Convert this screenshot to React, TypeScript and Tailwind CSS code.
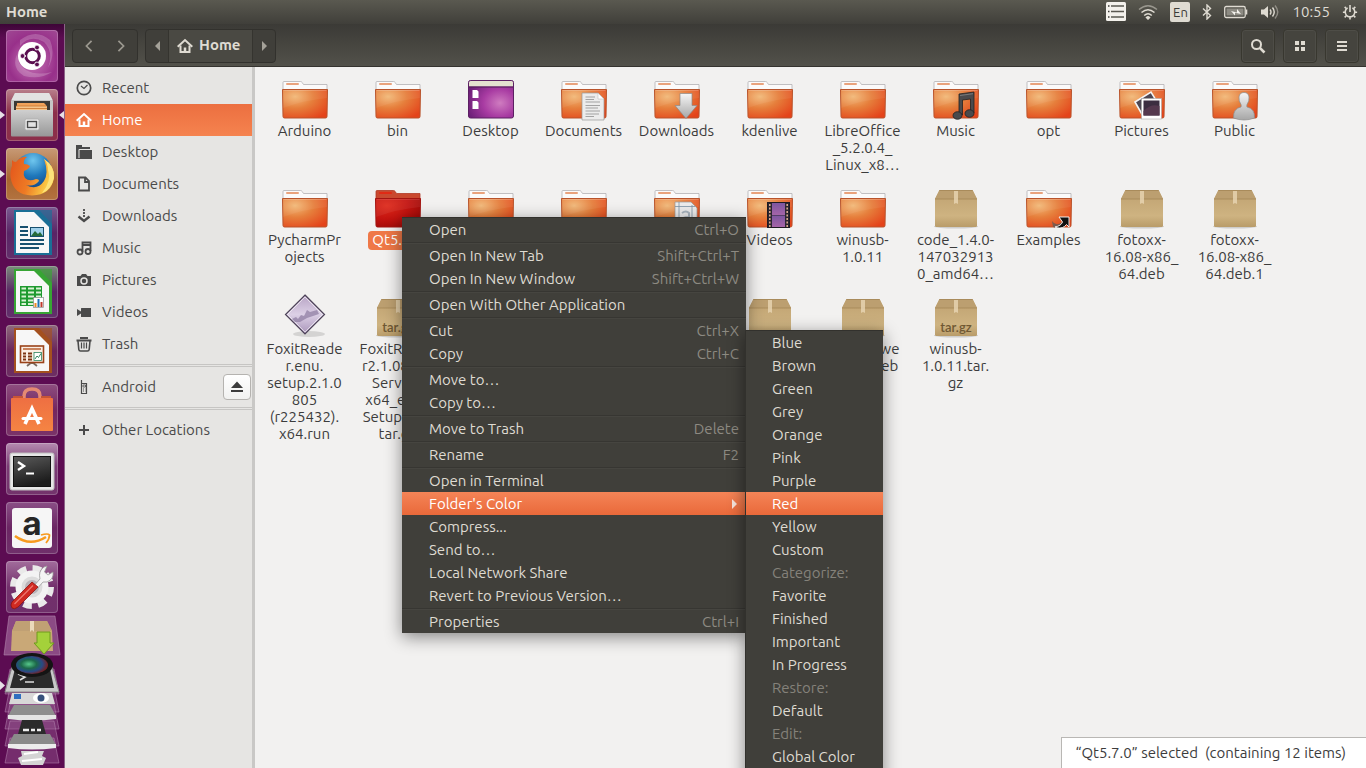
import type { ReactNode } from "react";

// ─── Types & data ─────────────────────────────────────────────
type IconKind =
  | "folder"
  | "red"
  | "desktop"
  | "documents"
  | "downloads"
  | "music"
  | "pictures"
  | "public"
  | "templates"
  | "videos"
  | "link"
  | "package"
  | "targz"
  | "foxit";

type FileItem = { icon: IconKind; lines: string[]; selected?: boolean };

const files: FileItem[] = [
  { icon: "folder", lines: ["Arduino"] },
  { icon: "folder", lines: ["bin"] },
  { icon: "desktop", lines: ["Desktop"] },
  { icon: "documents", lines: ["Documents"] },
  { icon: "downloads", lines: ["Downloads"] },
  { icon: "folder", lines: ["kdenlive"] },
  { icon: "folder", lines: ["LibreOffice", "_5.2.0.4_", "Linux_x8…"] },
  { icon: "music", lines: ["Music"] },
  { icon: "folder", lines: ["opt"] },
  { icon: "pictures", lines: ["Pictures"] },
  { icon: "public", lines: ["Public"] },
  { icon: "folder", lines: ["PycharmPr", "ojects"] },
  { icon: "red", lines: ["Qt5.7.0"], selected: true },
  { icon: "folder", lines: [] },
  { icon: "folder", lines: [] },
  { icon: "templates", lines: [] },
  { icon: "videos", lines: ["Videos"] },
  { icon: "folder", lines: ["winusb-", "1.0.11"] },
  { icon: "package", lines: ["code_1.4.0-", "147032913", "0_amd64…"] },
  { icon: "link", lines: ["Examples"] },
  { icon: "package", lines: ["fotoxx-", "16.08-x86_", "64.deb"] },
  { icon: "package", lines: ["fotoxx-", "16.08-x86_", "64.deb.1"] },
  {
    icon: "foxit",
    lines: ["FoxitReade", "r.enu.", "setup.2.1.0", "805", "(r225432).", "x64.run"],
  },
  {
    icon: "targz",
    lines: ["FoxitReade", "r2.1.0805_", "Server_", "x64_enu_", "Setup.run.", "tar.gz"],
  },
  { icon: "package", lines: [] },
  { icon: "package", lines: [] },
  { icon: "package", lines: [] },
  { icon: "package", lines: [] },
  { icon: "package", lines: ["teamviewe", "r_i386.deb"] },
  { icon: "targz", lines: ["winusb-", "1.0.11.tar.", "gz"] },
];

type MenuEntry = { label: string; keys?: string; active?: boolean };

// groups are divided by an etched line
const menuGroups: MenuEntry[][] = [
  [{ label: "Open", keys: "Ctrl+O" }],
  [
    { label: "Open In New Tab", keys: "Shift+Ctrl+T" },
    { label: "Open In New Window", keys: "Shift+Ctrl+W" },
  ],
  [{ label: "Open With Other Application" }],
  [
    { label: "Cut", keys: "Ctrl+X" },
    { label: "Copy", keys: "Ctrl+C" },
  ],
  [{ label: "Move to…" }, { label: "Copy to…" }],
  [{ label: "Move to Trash", keys: "Delete" }],
  [{ label: "Rename", keys: "F2" }],
  [
    { label: "Open in Terminal" },
    { label: "Folder's Color", active: true },
    { label: "Compress..." },
    { label: "Send to…" },
    { label: "Local Network Share" },
    { label: "Revert to Previous Version…" },
  ],
  [{ label: "Properties", keys: "Ctrl+I" }],
];

const colorMenu = [
  "Blue",
  "Brown",
  "Green",
  "Grey",
  "Orange",
  "Pink",
  "Purple",
  "Red",
  "Yellow",
  "Custom",
  "Categorize:",
  "Favorite",
  "Finished",
  "Important",
  "In Progress",
  "Restore:",
  "Default",
  "Edit:",
  "Global Color",
];

// ─── Shared gradients ─────────────────────────────────────────
const Gradients = () => (
  <svg width="0" height="0" className="absolute" aria-hidden="true">
    <defs>
      <radialGradient id="gFolder" cx="0.28" cy="0.25" r="0.9">
        <stop offset="0" stopColor="#f2b877" />
        <stop offset="0.45" stopColor="#e67f3c" />
        <stop offset="1" stopColor="#e4431a" />
      </radialGradient>
      <radialGradient id="gRed" cx="0.25" cy="0.25" r="0.95">
        <stop offset="0" stopColor="#dd2a1b" />
        <stop offset="0.5" stopColor="#c3130f" />
        <stop offset="1" stopColor="#960806" />
      </radialGradient>
      <radialGradient id="gDesk" cx="0.7" cy="0.6" r="0.75">
        <stop offset="0" stopColor="#cf7cc0" />
        <stop offset="0.5" stopColor="#a83ba2" />
        <stop offset="1" stopColor="#6d1f78" />
      </radialGradient>
      <linearGradient id="gBox" x1="0" y1="0" x2="0" y2="1">
        <stop offset="0.2" stopColor="#c3a675" />
        <stop offset="0.7" stopColor="#ceb381" />
        <stop offset="1" stopColor="#b99c69" />
      </linearGradient>
      <linearGradient id="gSilver" x1="0" y1="0" x2="0" y2="1">
        <stop offset="0" stopColor="#f6f6f6" />
        <stop offset="1" stopColor="#a6a6a6" />
      </linearGradient>
      <linearGradient id="gDrawer" x1="0" y1="0" x2="0" y2="1">
        <stop offset="0" stopColor="#cfcfcf" />
        <stop offset="1" stopColor="#979797" />
      </linearGradient>
      <linearGradient id="gFilm" x1="0" y1="0" x2="0" y2="1">
        <stop offset="0" stopColor="#7d56a0" />
        <stop offset="1" stopColor="#a565a8" />
      </linearGradient>
      <linearGradient id="gFoxit" x1="0" y1="0" x2="0" y2="1">
        <stop offset="0" stopColor="#b7a3c4" />
        <stop offset="0.5" stopColor="#dcd0e6" />
        <stop offset="1" stopColor="#a994b9" />
      </linearGradient>
      <radialGradient id="gGlobe" cx="0.5" cy="0.2" r="0.8">
        <stop offset="0" stopColor="#6fc6ee" />
        <stop offset="0.5" stopColor="#1f78bb" />
        <stop offset="1" stopColor="#123f7d" />
      </radialGradient>
      <linearGradient id="gFox" x1="0" y1="0" x2="1" y2="0.3">
        <stop offset="0" stopColor="#e2531c" />
        <stop offset="0.55" stopColor="#ee7a24" />
        <stop offset="1" stopColor="#fbd148" />
      </linearGradient>
      <linearGradient id="gBag" x1="0" y1="0" x2="0" y2="1">
        <stop offset="0" stopColor="#ee6f42" />
        <stop offset="1" stopColor="#f58443" />
      </linearGradient>
      <linearGradient id="gTerm" x1="0" y1="0" x2="0.3" y2="1">
        <stop offset="0" stopColor="#5a5a5a" />
        <stop offset="1" stopColor="#1c1c1c" />
      </linearGradient>
      <radialGradient id="gLens" cx="0.4" cy="0.45" r="0.6">
        <stop offset="0" stopColor="#57c98b" />
        <stop offset="0.4" stopColor="#1d6a4a" />
        <stop offset="0.7" stopColor="#274a86" />
        <stop offset="1" stopColor="#7a1e1e" />
      </radialGradient>
    </defs>
  </svg>
);

// ─── File icons ───────────────────────────────────────────────
const Folder = ({ red }: { red?: boolean }) => (
  <g>
    <path
      d="M2 12V2.500Q2 1.500 3 1.500H19.500Q20.500 1.500 21.200 2.500L22.500 4.500H46V12Z"
      fill={red ? "#c9492f" : "#fbfafa"}
      stroke={red ? "#b03a26" : "#b3b1b4"}
      strokeWidth="0.8"
    />
    <rect x="5" y="3" width="13" height="2" rx="1" fill={red ? "#e02a15" : "#e9a27c"} />
    <path
      d="M1.500 9.500H46.500L46 36.500Q46 38 44.500 38H3.500Q2 38 2 36.500Z"
      fill={red ? "url(#gRed)" : "url(#gFolder)"}
      stroke={red ? "#a31410" : "#b9542c"}
      strokeWidth="1"
    />
    <path d="M2.500 10.500H45.500" stroke="#fff" strokeOpacity={red ? 0.1 : 0.2} />
    <path d="M2 10H46L46 18Q24 20 2 28Z" fill="#fff" opacity="0.06" />
  </g>
);

const Box = ({ tar }: { tar?: boolean }) => (
  <g>
    <ellipse cx="24" cy="37.500" rx="22" ry="2" fill="#000" opacity="0.15" />
    <path d="M7.500 1H40.500L45 10V36.500Q45 38 43.500 38H4.500Q3 38 3 36.500V10Z" fill="url(#gBox)" />
    <path d="M7.500 1H40.500L45 10H3Z" fill="#bc9f70" />
    <path d="M7.500 1.500H40.500M3 10H45" stroke="#a58655" strokeWidth="0.8" />
    <path d="M22 2H26V15L24 14L22 15Z" fill="#e8d6b4" opacity="0.8" />
    {tar && (
      <text
        x="24"
        y="34"
        textAnchor="middle"
        fontSize="13"
        fontFamily="Lato, sans-serif"
        fontWeight="600"
        fill="#6f5833"
      >
        tar.gz
      </text>
    )}
  </g>
);

const overlays: Partial<Record<IconKind, ReactNode>> = {
  documents: (
    <g>
      <path d="M22 13H38L44 19V40H22Z" fill="#ececec" stroke="#9a9a9a" strokeWidth="0.7" />
      <path d="M38 13V19H44Z" fill="#fff" stroke="#b5b5b5" strokeWidth="0.5" />
      <path
        d="M25.500 17H35M25.500 19.500H34M25.500 22H40M25.500 25.500H40M25.500 28H38M25.500 31H40M25.500 34H39M25.500 36.500H34"
        stroke="#9b9b9b"
        strokeWidth="0.9"
      />
    </g>
  ),
  downloads: (
    <path
      d="M27 13.500H39V25.500H44L33 38.500L22 25.500H27Z"
      fill="url(#gSilver)"
      stroke="#8b8b8b"
      strokeWidth="0.7"
    />
  ),
  music: (
    <g stroke="#222" strokeWidth="0.8" fill="#4a4a4c">
      <path d="M27 14L42 12V33H38.500V19L30.500 20V35H27Z" />
      <ellipse cx="25.500" cy="35.500" rx="4.500" ry="3.800" />
      <ellipse cx="37.500" cy="33.500" rx="4.500" ry="3.800" />
      <path d="M28 15.500L41 13.700" stroke="#888" />
    </g>
  ),
  pictures: (
    <g>
      <path d="M17 22L33 12L41 25L25 36Z" fill="#4d4652" stroke="#f4f4f4" strokeWidth="1.600" />
      <rect x="23.500" y="18.500" width="20" height="20.500" fill="#fff" stroke="#a9a9a9" strokeWidth="0.6" />
      <rect x="25.500" y="20.500" width="16" height="15" fill="#3b2d40" />
      <path d="M25.500 31Q33 23 41.500 26V35.500H25.500Z" fill="#54384e" />
    </g>
  ),
  public: (
    <g fill="url(#gSilver)" stroke="#8d8d8d" strokeWidth="0.7">
      <path d="M22.500 38Q22 28.500 30 27Q30.500 26 30 24.500Q27.500 21 28 17Q28.500 12.500 33 12.500Q37.500 12.500 38 17Q38.500 21 36 24.500Q35.500 26 36 27Q44 28.500 43.500 38Q33 42 22.500 38Z" />
    </g>
  ),
  templates: (
    <g>
      <path d="M22 13H38L44 19V39H22Z" fill="#ececec" stroke="#9a9a9a" strokeWidth="0.7" />
      <path d="M22 17.500H42M26 13V39M39 16V39" stroke="#7c93a5" strokeWidth="0.8" />
      <path d="M29 24Q33 21 36 24V33Q29 36 29 31Q29 28 36 28" fill="none" stroke="#a9b4be" strokeWidth="2" />
    </g>
  ),
  videos: (
    <g>
      <rect x="21.500" y="13.500" width="22" height="25" fill="#2b2630" stroke="#1e1a22" />
      <rect x="26" y="14" width="13" height="12" fill="url(#gFilm)" />
      <rect x="26" y="26.500" width="13" height="11.500" fill="url(#gFilm)" />
      <path d="M23.800 15V38M41.200 15V38" stroke="#d9a98c" strokeWidth="1.600" strokeDasharray="2 1.500" />
    </g>
  ),
  link: (
    <g>
      <path d="M27 32Q31 38 37 33L38 36Q33 40 28 38Z" fill="#7d5a4c" />
      <path
        d="M30 38Q36 37 37.500 33L34 28H44V38L41.500 35.500Q38 40 32 38.800Z"
        fill="#111"
        stroke="#fff"
        strokeWidth="0.9"
      />
    </g>
  ),
};

const FileIcon = ({ kind }: { kind: IconKind }) => {
  let body: ReactNode;
  if (kind === "package" || kind === "targz") {
    body = <Box tar={kind === "targz"} />;
  } else if (kind === "desktop") {
    body = (
      <g>
        <rect x="1.500" y="0.500" width="45" height="37.500" rx="2" fill="url(#gDesk)" stroke="#5c2063" />
        <path d="M2 6.500V2.500Q2 1 3.500 1H44.500Q46 1 46 2.500V6.500Z" fill="#e4e1cf" />
        <path d="M2 7H46" stroke="#4e1d55" />
        <path d="M5.500 10H10L11.500 11.500V18H5.500ZM5.500 21H10L11.500 22.500V29H5.500Z" fill="#fff" />
      </g>
    );
  } else if (kind === "foxit") {
    body = (
      <g>
        <ellipse cx="28" cy="36" rx="16" ry="3" fill="#000" opacity="0.12" />
        <path d="M24 -3L43.500 16.500L24 36L4.500 16.500Z" fill="url(#gFoxit)" stroke="#4e4459" strokeWidth="1.200" />
        <path d="M24 -1L41.500 16.500L24 34L6.500 16.500Z" fill="none" stroke="#fff" strokeOpacity="0.6" />
        <path d="M11 21L15 19L17 21L20 17L23 18L26 12L29 14L36 12L38 16L26 20L19 24L14 24Z" fill="#8b7aa0" opacity="0.7" />
      </g>
    );
  } else {
    body = (
      <g>
        <Folder red={kind === "red"} />
        {overlays[kind]}
      </g>
    );
  }
  return (
    <svg viewBox="0 0 48 40" className="block h-10 w-12 overflow-visible" aria-hidden="true">
      {body}
    </svg>
  );
};

const FileTile = ({ item }: { item: FileItem }) => (
  <button type="button" className="flex h-[109px] flex-col items-center gap-[2px]">
    <FileIcon kind={item.icon} />
    <span
      className={
        item.selected
          ? "rounded bg-[#ef7847] px-1 pb-[2px] text-center text-[15px] leading-[17px] text-white"
          : "text-center text-[15px] leading-[17px] text-[#3c3c3c]"
      }
    >
      {item.lines.map((line) => (
        <span key={line} className="block whitespace-nowrap">
          {line}
        </span>
      ))}
    </span>
  </button>
);

// ─── Launcher ─────────────────────────────────────────────────
const OfficePage = ({ color, children }: { color: string; children: ReactNode }) => (
  <g>
    <path d="M8 3H33L46 17V48H8Z" fill={color} />
    <path d="M30 3H46V18Z" fill={color} opacity="0.65" />
    <path d="M10 5H28L43 20V46H10Z" fill="#f7f7f7" />
    {children}
  </g>
);

const launcherItems: { name: string; tint: string; left?: boolean; right?: boolean; icon: ReactNode }[] = [
  {
    name: "Search your computer",
    tint: "bg-[radial-gradient(circle_at_50%_60%,#c878b8,#98308a_60%,#a04a94)]",
    icon: (
      <g>
        <path
          d="M14 16Q24 4 38 12Q48 22 42 38Q50 24 44 10Q30 -2 14 10ZM12 22Q4 38 18 46Q34 50 46 42Q30 46 20 40Q10 34 12 22Z"
          fill="#fff"
          fillOpacity="0.2"
        />
        <circle cx="26" cy="26" r="14" fill="#fff" />
        <circle cx="26.500" cy="26" r="6.800" fill="none" stroke="#5b0f50" strokeWidth="3" />
        <path d="M20 26H15M29.500 20L32 16M29.500 32L32 36" stroke="#fff" strokeWidth="1.500" />
        <circle cx="16.500" cy="26" r="2.400" fill="#5b0f50" stroke="#fff" strokeWidth="0.8" />
        <circle cx="31" cy="17.500" r="2.400" fill="#5b0f50" stroke="#fff" strokeWidth="0.8" />
        <circle cx="31" cy="34.500" r="2.400" fill="#5b0f50" stroke="#fff" strokeWidth="0.8" />
      </g>
    ),
  },
  {
    name: "Files",
    tint: "bg-[linear-gradient(#b9808c,#8c2f4a_45%,#8c2f4a)]",
    left: true,
    right: true,
    icon: (
      <g>
        <path d="M9 4H43L47 12V46H5V12Z" fill="#c6c6c6" />
        <path d="M9 4H43L46.500 11H5.500Z" fill="#e2e2e2" />
        <rect x="8" y="12" width="36" height="11" fill="#3b3936" />
        <path d="M11 14H38L40 16V22H11Z" fill="#f1a25a" />
        <path d="M10 17H41V23H10Z" fill="#f6c489" />
        <path d="M10 17H41M10 19.500H41" stroke="#c9732d" strokeWidth="0.8" />
        <rect x="5" y="21" width="42" height="26.500" rx="1" fill="url(#gDrawer)" />
        <rect x="19" y="30" width="14" height="11" rx="1.500" fill="#f2f2f2" stroke="#b0b0b0" />
        <rect x="21.500" y="32.500" width="9" height="6" fill="#e2e2e2" stroke="#4a4a4a" strokeWidth="1.400" />
      </g>
    ),
  },
  {
    name: "Firefox",
    tint: "bg-[linear-gradient(#c79a76,#a8642f_60%,#b27340)]",
    left: true,
    icon: (
      <g>
        <circle cx="27" cy="24" r="19" fill="url(#gGlobe)" />
        <path
          d="M6 12Q7 14 10 14Q15 8 21 9Q17 12 18 16Q22 16 24 18Q23 21 18 23Q17 27 19 30Q23 34 30 31Q33 31 33 33Q28 39 20 37Q31 43 38 33Q43 25 38 11Q49 18 48 30Q45 47 26 47.500Q7 47 4.500 29Q4 22 6 18Z"
          fill="url(#gFox)"
        />
        <path d="M38 11Q49 18 48 30Q45 42 36 45Q46 33 42 22Q42 16 38 11Z" fill="#fde27a" />
      </g>
    ),
  },
  {
    name: "LibreOffice Writer",
    tint: "bg-[linear-gradient(#7a5a90,#5a2465_50%,#63306b)]",
    icon: (
      <OfficePage color="#1a6f96">
        <path d="M14 20H22M14 24H22M14 28H22M14 33H38M14 37H38M14 41H33" stroke="#17506f" strokeWidth="2" />
        <rect x="24.500" y="20.500" width="13" height="9" fill="#9fd0ea" stroke="#17506f" />
        <path d="M25 29L29 24L32 27L34 25L37 29Z" fill="#256b39" />
      </OfficePage>
    ),
  },
  {
    name: "LibreOffice Calc",
    tint: "bg-[linear-gradient(#7a8c7a,#5a2465_50%,#63306b)]",
    icon: (
      <OfficePage color="#37a534">
        <rect x="14" y="20" width="22" height="20" fill="#1f9a30" />
        <path
          d="M15.500 22.500H20M22 22.500H28M30 22.500H35M15.500 26.500H20M22 26.500H28M30 26.500H35M15.500 30.500H20M22 30.500H28M30 30.500H35M15.500 34.500H20M22 34.500H28M15.500 38H20M22 38H28"
          stroke="#d9f2d4"
          strokeWidth="2"
        />
        <rect x="27.500" y="31.500" width="10" height="10" fill="#fff" stroke="#8a8a8a" strokeWidth="0.7" />
        <path d="M29.500 41V37" stroke="#f08a24" strokeWidth="2" />
        <path d="M32.500 41V33" stroke="#2272b4" strokeWidth="2" />
        <path d="M35.500 41V36" stroke="#c0392b" strokeWidth="2" />
      </OfficePage>
    ),
  },
  {
    name: "LibreOffice Impress",
    tint: "bg-[linear-gradient(#8e6a7c,#6a2459_50%,#6d2f63)]",
    icon: (
      <OfficePage color="#a4501f">
        <path d="M21 41L26 37L31 41M26 37V39" stroke="#7a6a60" strokeWidth="1.800" fill="none" />
        <rect x="14.500" y="21" width="23" height="16.500" fill="#fbeee4" stroke="#9a431a" strokeWidth="1.600" />
        <path d="M17 24H35" stroke="#b95f31" strokeWidth="1.500" />
        <path d="M17 28.500H20M22 28.500H26M17 31.500H20M22 31.500H26M17 34.500H20M22 34.500H26" stroke="#7c3413" strokeWidth="1.800" />
        <rect x="28" y="27.500" width="7.500" height="8" fill="#fff" stroke="#2f8560" strokeWidth="0.8" />
        <path d="M29 34L31 31L32.500 32.500L35 28.500" stroke="#2f8560" fill="none" />
      </OfficePage>
    ),
  },
  {
    name: "Ubuntu Software",
    tint: "bg-[linear-gradient(#8e4f80,#74265f_50%,#7a3369)]",
    icon: (
      <g>
        <path d="M18 16V12Q18 5 26 5Q34 5 34 12V16" fill="none" stroke="#e58a72" strokeWidth="3.500" />
        <path d="M7 12H17V15H35V12H45V15H7Z" fill="#c65536" />
        <rect x="5" y="14" width="42" height="33" rx="1" fill="url(#gBag)" />
        <path d="M19 40L26 24.500L33 40" fill="none" stroke="#fff" strokeWidth="3.600" />
        <path d="M17 34.500H35" stroke="#fff" strokeWidth="3" strokeLinecap="round" />
      </g>
    ),
  },
  {
    name: "Terminal",
    tint: "bg-[linear-gradient(#b58bb0,#7a3a74_45%,#73336c)]",
    icon: (
      <g>
        <rect x="4" y="10" width="44" height="37" rx="2" fill="#e6e6e6" stroke="#bdbdbd" />
        <rect x="7.500" y="13.500" width="37" height="30" fill="url(#gTerm)" stroke="#111" />
        <path d="M12 19L18 23L12 27" fill="none" stroke="#fff" strokeWidth="2.400" />
        <path d="M20 30.500H28" stroke="#fff" strokeWidth="2.200" />
      </g>
    ),
  },
  {
    name: "Amazon",
    tint: "bg-[linear-gradient(#8a4f86,#6b2563_50%,#70306b)]",
    icon: (
      <g>
        <rect x="6" y="6" width="40" height="40" rx="3" fill="#f6f6f6" />
        <text
          x="26"
          y="33"
          textAnchor="middle"
          fontSize="33"
          fontFamily="Inter, sans-serif"
          fontWeight="700"
          fill="#262626"
        >
          a
        </text>
        <path d="M9 34Q24 45 40 35" fill="none" stroke="#f79a1e" strokeWidth="2.600" />
        <path d="M35 33Q42 31 43.500 33Q43.500 37 40 41" fill="none" stroke="#f79a1e" strokeWidth="1.800" />
      </g>
    ),
  },
  {
    name: "System Settings",
    tint: "bg-[linear-gradient(#a26d9c,#73306c_50%,#70306b)]",
    icon: (
      <g>
        <circle cx="26" cy="26" r="18" fill="none" stroke="#e9e9e9" strokeWidth="8" strokeDasharray="8.140 6" />
        <circle cx="26" cy="26" r="13.500" fill="#dcdcdc" stroke="#f3f3f3" strokeWidth="6" />
        <circle cx="26" cy="26" r="7" fill="#b9b4ba" />
        <path d="M26 27L34 18Q32 10 38 6L41 5L38.500 11L42 14L47 11Q48 18 41 21L37 21L29 30Z" fill="#f4f4f4" stroke="#9c9c9c" strokeWidth="0.8" />
        <path d="M6 41L26 21L32 26L12 46Q8 49 6 47Q4 44 6 41Z" fill="#d02a22" stroke="#8e1411" strokeWidth="0.8" />
        <path d="M8.500 43L27 24.500" stroke="#ee7a70" strokeWidth="1.200" />
      </g>
    ),
  },
];

// Icons that no longer fit fold over each other at the foot of the bar
const LauncherStack = () => (
  <svg viewBox="0 0 65 155" className="-mt-[7px] block h-[155px] w-[65px] shrink-0" aria-hidden="true">
    <path d="M0 68L5 72.500L0 77Z" fill="#e6dfe6" />
    {[56, 74, 91, 108, 125].map((y) => (
      <path
        key={y}
        d={`M10 ${y}H54L59 ${y + 25}H5Z`}
        fill="#9a5f97"
        fillOpacity="0.4"
        stroke="#b98bb6"
        strokeOpacity="0.5"
      />
    ))}
    <path d="M9 3H55L60 42H4Z" fill="#8b4a84" stroke="#b387ae" strokeOpacity="0.6" />
    {/* package installer */}
    <path d="M16 8H47L52 18L53 38H11L12 18Z" fill="#c9a877" />
    <path d="M16 8H47L52 18H12Z" fill="#c0a074" />
    <path d="M30 8H34V19L32 17L30 19Z" fill="#ead9ba" />
    <path d="M37 19H50V30H54L44 41L34 30H37Z" fill="#a4d13a" stroke="#6e9a1d" />
    {/* second terminal */}
    <path d="M12 54H52L59 79H5Z" fill="#c9c9c9" stroke="#8a8a8a" />
    <path d="M15 56H50L54 75H10Z" fill="#2b2b2b" />
    <path d="M18 61L25 64L20 67M25 69H34" stroke="#ddd" strokeWidth="1.600" fill="none" />
    {/* camera lens */}
    <ellipse cx="32" cy="52" rx="21" ry="12" fill="#141414" />
    <ellipse cx="32" cy="52" rx="16" ry="9" fill="url(#gLens)" />
    {/* drives and devices */}
    <path d="M12 80H52L55 91H9Z" fill="#d8d8d8" />
    <rect x="14" y="81" width="7" height="5" fill="#2f6fc0" />
    <ellipse cx="41" cy="85" rx="8" ry="5" fill="#fff" />
    <circle cx="41" cy="85" r="3.500" fill="#38517c" />
    <path d="M14 92H50L56 103H8Z" fill="#8e8e8e" />
    <path d="M8 102H56V106Q32 109 8 106Z" fill="#e4e4e4" />
    <path d="M22 107H42L46 121H18Z" fill="#2b2b2b" />
    <path d="M23 117H29M31 117H35M37 117H41" stroke="#eee" strokeWidth="2.400" />
    <path d="M14 121H50L56 132H8Z" fill="#8a8a8a" />
    <path d="M8 131H56V135Q32 138 8 135Z" fill="#ececec" />
    <path d="M21 138H44L42 143L46 145L43 152H21L18 145L22 143Z" fill="#d4d4d4" />
    <path d="M24 141L38 139M22 148L42 146" stroke="#fff" strokeWidth="2" />
  </svg>
);

const Launcher = () => (
  <nav
    aria-label="Launcher"
    className="flex w-[65px] shrink-0 flex-col overflow-hidden border-r border-[#8b6287] bg-[linear-gradient(#3d0537,#5c0c52_14px,#5c0c52)] pt-[6px]"
  >
    {launcherItems.map((item) => (
      <div key={item.name} className="flex h-[59px] shrink-0 items-start">
        <span className="flex h-[52px] w-[6px] items-center">
          {item.left && <span className="border-y-4 border-l-[5px] border-y-transparent border-l-[#e6dfe6]" />}
        </span>
        <button
          type="button"
          aria-label={item.name}
          className={`h-[52px] w-[52px] overflow-hidden rounded shadow-[inset_0_0_0_1px_rgba(255,255,255,0.22)] ${item.tint}`}
        >
          <svg viewBox="0 0 52 52" className="block h-full w-full">
            {item.icon}
          </svg>
        </button>
        <span className="flex h-[52px] flex-1 items-center justify-end">
          {item.right && <span className="border-y-4 border-r-[5px] border-y-transparent border-r-[#e6dfe6]" />}
        </span>
      </div>
    ))}
    <LauncherStack />
  </nav>
);

// ─── Top panel ────────────────────────────────────────────────
const TopPanel = () => (
  <header className="flex h-6 shrink-0 items-center justify-between bg-[linear-gradient(#5a5950,#403f3a)] pr-2 pl-[6px] text-[15px] leading-6 text-[#dfdbd2]">
    <span className="font-bold">Home</span>
    <div className="flex items-center">
      <svg viewBox="0 0 20 20" className="mr-3 h-5 w-5">
        <rect x="0" y="0" width="20" height="19" rx="1.500" fill="#f3f1ec" />
        <path d="M5 4H18M5 9.500H18M5 15H18" stroke="#5a5850" strokeWidth="1.600" />
        <path d="M2 4H3.500M2 9.500H3.500M2 15H3.500" stroke="#3a3935" strokeWidth="1.600" />
      </svg>
      <svg viewBox="0 0 20 16" className="mr-3 h-4 w-5" fill="none" stroke="currentColor" strokeWidth="1.500">
        <path d="M1 5.500Q10 -2 19 5.500" strokeOpacity="0.5" />
        <path d="M3.500 8.500Q10 3 16.500 8.500" />
        <path d="M6.200 11.500Q10 8 13.800 11.500" />
        <path d="M8.500 13.500L10 15L11.500 13.500Q10 12.200 8.500 13.500Z" fill="currentColor" />
      </svg>
      <span className="mr-3 h-5 w-5 rounded-xs bg-[#dfdbd2] text-center text-[13px] leading-5 text-[#3c3b37]">
        En
      </span>
      <svg viewBox="0 0 10 16" className="mr-3 h-4 w-[10px]" fill="none" stroke="currentColor" strokeWidth="1.400">
        <path d="M1 4.500L8.500 11.500L5 15V1L8.500 4.500L1 11.500" />
      </svg>
      <svg viewBox="0 0 24 14" className="mr-3 h-[14px] w-6" fill="none" stroke="currentColor">
        <rect x="0.700" y="1.500" width="20.500" height="11" rx="1.500" strokeWidth="1.300" />
        <rect x="2.500" y="3.500" width="17" height="7" fill="#8d8b83" stroke="none" />
        <path d="M22.500 4.500V9.500" strokeWidth="1.600" />
        <path d="M7 6L13 7.500V4L17 9L11 7.800V10.500Z" fill="#f5f3ee" stroke="none" />
      </svg>
      <svg viewBox="0 0 20 16" className="mr-3 h-4 w-5" fill="none" stroke="currentColor" strokeWidth="1.400">
        <path d="M1 5.500H4L8 2V14L4 10.500H1Z" fill="currentColor" stroke="none" />
        <path d="M10 5.500Q12 8 10 10.500M12.500 3.500Q16 8 12.500 12.500" />
        <path d="M15 1.500Q20.500 8 15 14.500" strokeOpacity="0.45" />
      </svg>
      <span className="mr-3">10:55</span>
      <svg viewBox="0 0 18 18" className="h-[18px] w-4" fill="none" stroke="currentColor">
        <path d="M6.300 4.400A5.400 5.400 0 1 0 11.700 4.400" strokeWidth="1.800" />
        <path d="M9 1V9" strokeWidth="1.800" />
        <path
          d="M4.800 5L3 3.200M13.200 5L15 3.200M3.500 9.200H1M14.500 9.200H17M4.800 13.200L3 15M13.200 13.200L15 15M9 15V17.500"
          strokeWidth="1.800"
        />
      </svg>
    </div>
  </header>
);

// ─── Window toolbar ───────────────────────────────────────────
const HomeGlyph = ({ className }: { className: string }) => (
  <svg viewBox="0 0 16 16" className={className} fill="none" stroke="currentColor" strokeWidth="2">
    <path d="M0.700 8.700L8 2L15.300 8.700" />
    <path d="M3.500 7.500V14H12.500V7.500" />
    <path d="M8 14V9.500" strokeWidth="2.500" />
  </svg>
);

const toolButton =
  "flex h-[34px] w-[34px] items-center justify-center rounded border border-[#38372f] bg-[#45443e] shadow-[inset_0_0_0_1px_rgba(255,255,255,0.05)]";

const Toolbar = () => (
  <div className="flex h-[43px] shrink-0 items-center justify-between border-b border-[#35332f] bg-[linear-gradient(#3b3a36,#52514a)] px-[7px] pt-px text-[#dfdbd2]">
    <div className="flex items-center gap-[7px]">
      <div className="flex h-[34px] w-[66px] rounded border border-[#32312d] bg-[#403f3a] text-[#9b988f]">
        <button type="button" aria-label="Back" className="flex flex-1 items-center justify-center">
          <svg viewBox="0 0 10 14" className="h-3 w-[10px]" fill="none" stroke="currentColor" strokeWidth="2">
            <path d="M8 1L2 7L8 13" />
          </svg>
        </button>
        <button type="button" aria-label="Forward" className="flex flex-1 items-center justify-center">
          <svg viewBox="0 0 10 14" className="h-3 w-[10px]" fill="none" stroke="currentColor" strokeWidth="2">
            <path d="M2 1L8 7L2 13" />
          </svg>
        </button>
      </div>
      <div className="flex h-[34px] rounded border border-[#32312d] bg-[#403f3a]">
        <button type="button" aria-label="Scroll path left" className="flex w-[22px] items-center justify-center">
          <span className="border-y-[5px] border-r-[5px] border-y-transparent border-r-[#a5a299]" />
        </button>
        <button
          type="button"
          className="flex items-center gap-[6px] border-x border-[#35342f] bg-[#4a4943] pr-3 pl-2 text-[15px] font-bold"
        >
          <HomeGlyph className="h-4 w-4" />
          Home
        </button>
        <button type="button" aria-label="Scroll path right" className="flex w-[22px] items-center justify-center">
          <span className="border-y-[5px] border-l-[5px] border-y-transparent border-l-[#a5a299]" />
        </button>
      </div>
    </div>
    <div className="flex gap-2">
      <button type="button" aria-label="Search" className={toolButton}>
        <svg viewBox="0 0 16 16" className="h-4 w-4" fill="none" stroke="currentColor">
          <circle cx="6.500" cy="6.500" r="4.500" strokeWidth="2" />
          <path d="M9.800 9.800L14.500 14.500" strokeWidth="2.600" />
        </svg>
      </button>
      <button type="button" aria-label="Icon view" className={toolButton}>
        <svg viewBox="0 0 16 16" className="h-4 w-4" fill="currentColor">
          <path d="M3 3H7V7H3ZM9 3H13V7H9ZM3 9H7V13H3ZM9 9H13V13H9Z" />
        </svg>
      </button>
      <button type="button" aria-label="Menu" className={toolButton}>
        <svg viewBox="0 0 16 16" className="h-4 w-4" fill="currentColor">
          <path d="M3 3H13V5H3ZM3 7H13V9H3ZM3 11H13V13H3Z" />
        </svg>
      </button>
    </div>
  </div>
);

// ─── Sidebar ──────────────────────────────────────────────────
const places: { name: string; icon: ReactNode }[] = [
  {
    name: "Recent",
    icon: (
      <g fill="none" stroke="currentColor">
        <circle cx="8" cy="8" r="6.700" strokeWidth="1.700" />
        <path d="M5 6L8 8.500L11.500 5" strokeWidth="1.200" />
      </g>
    ),
  },
  { name: "Home", icon: null },
  {
    name: "Desktop",
    icon: <path d="M0 1H6V3H14V5H3.500Q2.500 5 2.500 6V14H3.500V6H16V15H0Z" fill="currentColor" />,
  },
  {
    name: "Documents",
    icon: <path d="M3 1.500H9.500L13 5V14.500H3ZM9 1.500V6H13" fill="none" stroke="currentColor" strokeWidth="1.800" />,
  },
  {
    name: "Downloads",
    icon: (
      <g fill="none" stroke="currentColor">
        <path d="M8 1V9" strokeWidth="1.800" strokeDasharray="2 1" />
        <path d="M2.500 8.500L8 13L13.500 8.500" strokeWidth="2.400" />
      </g>
    ),
  },
  {
    name: "Music",
    icon: (
      <g fill="none" stroke="currentColor" strokeWidth="1.800">
        <path d="M6.500 12V2.500H14.500V11M6.500 5H14.500" />
        <circle cx="4" cy="12" r="2.500" />
        <circle cx="12" cy="11.500" r="2.500" />
      </g>
    ),
  },
  {
    name: "Pictures",
    icon: (
      <g>
        <path d="M1 4H4.500L6 2H10L11.500 4H15V14H1Z" fill="currentColor" />
        <circle cx="8" cy="9" r="3" fill="none" stroke="#e6e5e3" strokeWidth="1.500" />
      </g>
    ),
  },
  {
    name: "Videos",
    icon: <path d="M5 4.500Q5 4 5.500 4H15V13H5.500Q5 13 5 12.500V9.500L1 12V5L5 7.500Z" fill="currentColor" />,
  },
  {
    name: "Trash",
    icon: (
      <g fill="none" stroke="currentColor">
        <path d="M0.500 4.500H15.500M4 2H12" strokeWidth="1.800" />
        <path d="M2 5L2.800 13.500Q3 15 4.500 15H11.500Q13 15 13.200 13.500L14 5" strokeWidth="1.600" />
        <path d="M5.500 6.500V12.500M8 6.500V12.500M10.500 6.500V12.500" strokeWidth="1.200" />
      </g>
    ),
  },
];

const placeRow = "flex h-8 items-center gap-[10px] pl-[11px]";

const Divider = () => <div className="my-1 h-[3px] border-y border-[#c6c5c3]" />;

const Sidebar = () => (
  <aside className="w-[190px] shrink-0 border-r-[3px] border-[#c9c8c6] bg-[#e6e5e3] pt-[5px] text-[15px] text-[#4a4a4a]">
    <nav aria-label="Places">
      {places.map((place) =>
        place.name === "Home" ? (
          <a
            key={place.name}
            href="#home"
            className={`${placeRow} bg-[linear-gradient(#ec6f40,#f5834f)] text-white`}
          >
            <HomeGlyph className="h-4 w-4" />
            {place.name}
          </a>
        ) : (
          <a key={place.name} href={`#${place.name.toLowerCase()}`} className={placeRow}>
            <svg viewBox="0 0 16 16" className="h-4 w-4">
              {place.icon}
            </svg>
            {place.name}
          </a>
        )
      )}
      <Divider />
      <div className="flex items-center justify-between pr-px">
        <a href="#android" className={placeRow}>
          <svg viewBox="0 0 16 16" className="h-4 w-4" fill="none" stroke="currentColor">
            <path d="M5.500 1V14.500H10.500V4.500H5.500" strokeWidth="1.200" />
            <path d="M7 6H9.500V8H7Z" strokeWidth="0.8" />
            <path d="M7 10H9.500M7 12H9.500" strokeDasharray="1 1" />
          </svg>
          Android
        </a>
        <button
          type="button"
          aria-label="Eject Android"
          className="flex h-[26px] w-7 items-center justify-center rounded border border-[#b5b3b0] bg-[linear-gradient(#ffffff,#f1f1f0)]"
        >
          <svg viewBox="0 0 14 12" className="h-3 w-[14px]" fill="#3c3c3c">
            <path d="M7 0.500L13 7H1ZM1 9H13V11H1Z" />
          </svg>
        </button>
      </div>
      <Divider />
      <a href="#other-locations" className={placeRow}>
        <svg viewBox="0 0 16 16" className="h-4 w-4" stroke="currentColor" strokeWidth="2">
          <path d="M8 3V13M3 8H13" />
        </svg>
        Other Locations
      </a>
    </nav>
  </aside>
);

// ─── Context menu ─────────────────────────────────────────────
const menuRow = "flex h-[23px] w-full items-center justify-between text-left text-[15px] leading-[23px]";
const activeRow = "bg-[linear-gradient(#f58457,#e9693a)] text-white";

const ContextMenu = () => (
  <div
    role="menu"
    aria-label="Folder actions"
    className="absolute top-[217px] left-[402px] w-[344px] border-t border-[#32312d] bg-[#403f3a] text-[#dfdbd2] shadow-[0_4px_16px_rgba(0,0,0,0.45)]"
  >
    {menuGroups.map((group, i) => (
      <div key={group[0].label}>
        {i > 0 && <div className="mt-px h-[2px] border-t border-[#373632] bg-[#464540]" />}
        {group.map((entry) => (
          <button
            key={entry.label}
            type="button"
            role="menuitem"
            className={`${menuRow} pr-[7px] pl-[27px] ${entry.active ? activeRow : ""}`}
          >
            {entry.label}
            {entry.keys && <span className="text-[#8d8a82]">{entry.keys}</span>}
            {entry.active && (
              <span className="mr-[2px] border-y-[5px] border-l-[5px] border-y-transparent border-l-[#f7e4dc]" />
            )}
          </button>
        ))}
      </div>
    ))}
    <div
      role="menu"
      aria-label="Folder's Color"
      className="absolute top-[112px] left-[343px] w-[138px] border border-r-0 border-[#32312d] bg-[#403f3a] pb-6 shadow-[0_4px_16px_rgba(0,0,0,0.45)]"
    >
      {colorMenu.map((label) => (
        <button
          key={label}
          type="button"
          role="menuitem"
          disabled={label.endsWith(":")}
          className={`${menuRow} pl-[26px] disabled:text-[#85827a] ${label === "Red" ? activeRow : ""}`}
        >
          {label}
        </button>
      ))}
    </div>
  </div>
);

// ─── Desktop ──────────────────────────────────────────────────
export default function App() {
  return (
    <div className="relative flex h-screen flex-col overflow-hidden bg-[#f2f1f0] font-['Ubuntu','Noto_Sans',sans-serif]">
      <Gradients />
      <TopPanel />
      <div className="flex min-h-0 flex-1">
        <Launcher />
        <div className="flex min-w-0 flex-1 flex-col">
          <Toolbar />
          <div className="flex min-h-0 flex-1">
            <Sidebar />
            <main className="relative min-w-0 flex-1 pt-[13px] pl-[3px]">
              <div className="grid grid-cols-[repeat(auto-fill,93px)]">
                {files.map((item, i) => (
                  <FileTile key={i} item={item} />
                ))}
              </div>
              <p className="absolute right-0 bottom-0 border-t border-l border-[#b9b7b4] bg-white py-1 pr-5 pl-[14px] text-[15px] leading-[22px] whitespace-pre text-[#3c3c3c]">
                “Qt5.7.0” selected  (containing 12 items)
              </p>
            </main>
          </div>
        </div>
      </div>
      <ContextMenu />
    </div>
  );
}
